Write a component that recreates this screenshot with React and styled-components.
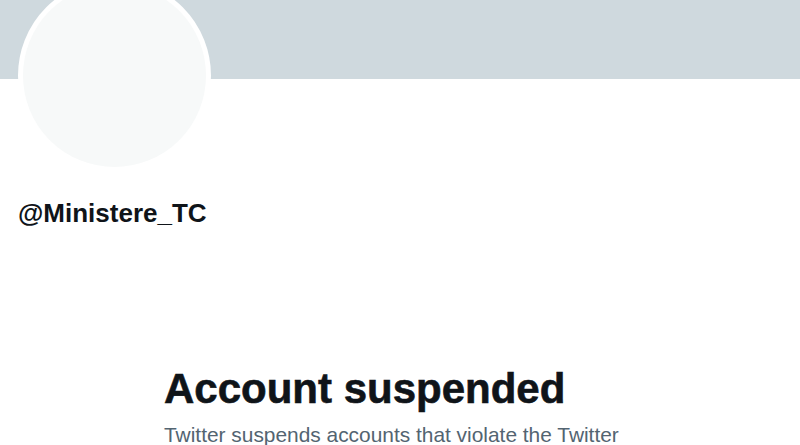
import React from "react";
import styled, { createGlobalStyle } from "styled-components";

const GlobalStyle = createGlobalStyle`
  html, body {
    margin: 0;
    padding: 0;
    background: #ffffff;
    overflow: hidden;
  }
  body {
    font-family: "Liberation Sans", Arial, sans-serif;
    color: #0f1419;
  }
`;

const Page = styled.div`
  width: 800px;
  height: 445px;
  overflow: hidden;
`;

const Banner = styled.div`
  height: 79px;
  background: #cfd9de;
`;

const ProfileHead = styled.div`
  padding-left: 18px;
`;

const Avatar = styled.div`
  width: 183px;
  height: 183px;
  margin-top: -100px;
  border: 5px solid #ffffff;
  border-radius: 50%;
  background: #f7f9f9;
`;

const Handle = styled.h2`
  margin: 26px 0 0;
  font-size: 26px;
  line-height: 30px;
  font-weight: 700;
  color: #0f1419;
`;

const Notice = styled.div`
  padding-left: 164px;
  margin-top: 137px;
`;

const Title = styled.h1`
  margin: 0;
  font-size: 42px;
  line-height: 48px;
  font-weight: 700;
  color: #0f1419;
  -webkit-text-stroke: 0.6px #0f1419;
`;

const Message = styled.p`
  margin: 10px 0 0;
  font-size: 20.9px;
  line-height: 24px;
  color: #536471;
  white-space: nowrap;
`;

export default function App() {
  return (
    <Page>
      <GlobalStyle />
      <Banner />
      <ProfileHead>
        <Avatar />
        <Handle>@Ministere_TC</Handle>
      </ProfileHead>
      <Notice>
        <Title>Account suspended</Title>
        <Message>Twitter suspends accounts that violate the Twitter</Message>
      </Notice>
    </Page>
  );
}
